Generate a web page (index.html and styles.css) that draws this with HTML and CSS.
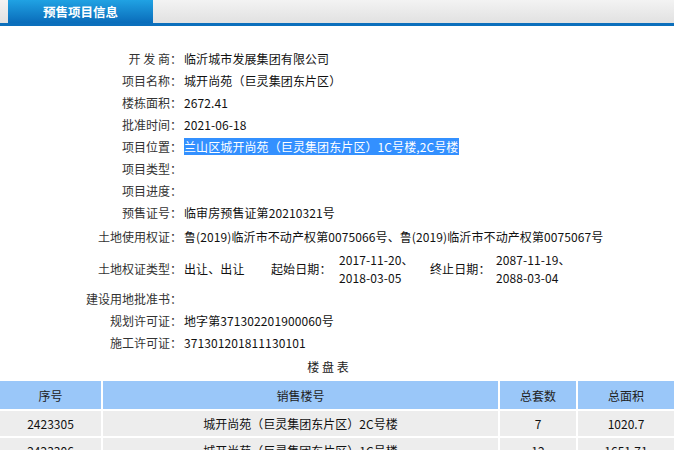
FILE: index.html
```html
<!DOCTYPE html>
<html lang="zh-CN">
<head>
    <meta charset="UTF-8">
    <title>预售项目信息</title>
    <link rel="stylesheet" href="styles.css">
</head>
<body>
    <div class="tabbar">
        <div class="tab">预售项目信息</div>
    </div>

    <table class="info">
        <tr><td class="label">开 发 商：</td><td class="value">临沂城市发展集团有限公司</td></tr>
        <tr><td class="label">项目名称：</td><td class="value">城开尚苑（巨灵集团东片区）</td></tr>
        <tr><td class="label">楼栋面积：</td><td class="value">2672.41</td></tr>
        <tr><td class="label">批准时间：</td><td class="value">2021-06-18</td></tr>
        <tr><td class="label">项目位置：</td><td class="value"><span class="picked">兰山区城开尚苑（巨灵集团东片区）1C号楼,2C号楼</span></td></tr>
        <tr><td class="label">项目类型：</td><td class="value"></td></tr>
        <tr><td class="label">项目进度：</td><td class="value"></td></tr>
        <tr><td class="label">预售证号：</td><td class="value">临审房预售证第20210321号</td></tr>
        <tr class="tall"><td class="label">土地使用权证：</td><td class="value">鲁(2019)临沂市不动产权第0075066号、鲁(2019)临沂市不动产权第0075067号</td></tr>
        <tr class="dates">
            <td class="label">土地权证类型：</td>
            <td class="value">
                <div class="split">
                    <span class="kind">出让、出让</span>
                    <span class="sub">起始日期：</span>
                    <span class="day start">2017-11-20、<br>2018-03-05</span>
                    <span class="sub end">终止日期：</span>
                    <span class="day">2087-11-19、<br>2088-03-04</span>
                </div>
            </td>
        </tr>
        <tr><td class="label">建设用地批准书：</td><td class="value"></td></tr>
        <tr><td class="label">规划许可证：</td><td class="value">地字第371302201900060号</td></tr>
        <tr><td class="label">施工许可证：</td><td class="value">371301201811130101</td></tr>
    </table>

    <div class="caption">楼 盘 表</div>

    <table class="list">
        <thead>
            <tr>
                <th class="c-no">序号</th>
                <th class="c-name">销售楼号</th>
                <th class="c-sets">总套数</th>
                <th class="c-area">总面积</th>
            </tr>
        </thead>
        <tbody>
            <tr><td>2423305</td><td>城开尚苑（巨灵集团东片区）2C号楼</td><td>7</td><td>1020.7</td></tr>
            <tr><td>2423306</td><td>城开尚苑（巨灵集团东片区）1C号楼</td><td>12</td><td>1651.71</td></tr>
        </tbody>
    </table>
</body>
</html>
```

FILE: styles.css
```css
body {
    margin: 0;
    font-family: "Noto Sans CJK SC", "Microsoft YaHei", sans-serif;
    font-size: 12px;
    color: #222;
    background: #fff;
    overflow: hidden;
}
.tabbar {
    height: 23px;
    padding-left: 8px;
    background: linear-gradient(#f3f3f3, #e1e1e1);
    border-bottom: 3px solid #0b6fbc;
}
.tab {
    width: 145px;
    height: 23px;
    line-height: 24px;
    text-align: center;
    color: #fff;
    font-weight: bold;
    font-size: 12.5px;
    background: linear-gradient(#20a2e3, #0a6cba);
}
.info {
    width: 656px;
    margin-top: 22px;
    border-collapse: collapse;
}
.info td {
    padding: 0;
    height: 22px;
    line-height: 22px;
    vertical-align: middle;
}
.info .label {
    width: 182px;
    text-align: right;
    color: #333;
    white-space: nowrap;
}
.info .value {
    padding-left: 2px;
    color: #111;
    letter-spacing: 0.1px;
}
.info tr.tall td {
    height: 26px;
}
.info tr.dates td {
    height: 38px;
}
.picked {
    background: #3390ff;
    color: #fff;
    padding: 0 1px 0 0;
}
.split {
    display: flex;
    align-items: center;
}
.split .kind {
    width: 87px;
}
.split .sub {
    width: 68px;
}
.split .sub.end {
    width: 66px;
}
.split .day {
    line-height: 18px;
}
.split .day.start {
    width: 91px;
}
.caption {
    width: 656px;
    height: 26px;
    line-height: 26px;
    text-align: center;
    color: #222;
}
.list {
    width: 678px;
    margin-top: -1px;
    margin-left: -2px;
    border-collapse: separate;
    border-spacing: 2px;
}
.list th {
    height: 28px;
    padding: 0;
    font-weight: normal;
    color: #222;
    background: #9ac7f9;
}
.list td {
    height: 25px;
    padding: 0;
    text-align: center;
    color: #111;
    background: #ededed;
}
.list .c-no {
    width: 101px;
}
.list .c-name {
    width: 395px;
}
.list .c-sets {
    width: 76px;
}
```
